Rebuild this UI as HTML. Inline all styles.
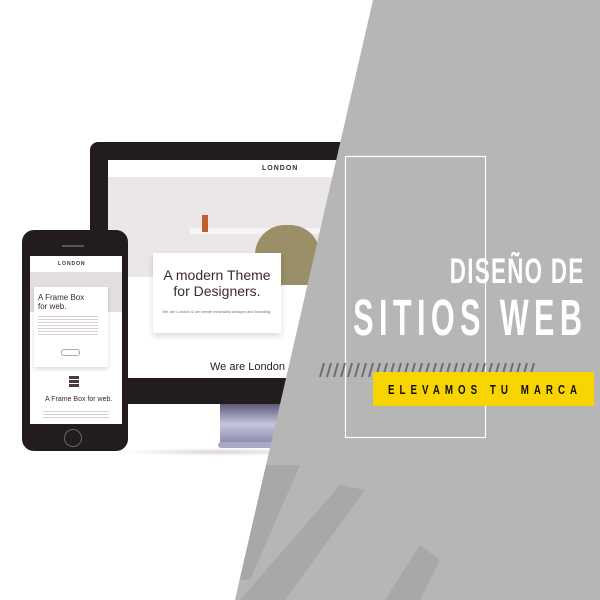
<!DOCTYPE html>
<html><head><style>
body{margin:0;width:600px;height:600px;overflow:hidden;background:#fff;position:relative;font-family:"Liberation Sans",sans-serif}
.a{position:absolute}
.cond{font-family:"Liberation Sans",sans-serif;font-weight:bold;color:#fff;white-space:nowrap}
</style></head><body>
<!-- monitor -->
<div class="a" style="left:90px;top:142px;width:280px;height:262px;background:#231c1e;border-radius:8px"></div>
<div class="a" style="left:108px;top:160px;width:262px;height:218px;background:#fff"></div>
<div class="a" style="left:108px;top:177px;width:262px;height:100px;background:#ebe6e8"></div>
<div class="a" style="left:190px;top:228px;width:150px;height:6px;background:#f6f4f4"></div>
<div class="a" style="left:255px;top:225px;width:65px;height:60px;background:#9a8f66;border-radius:30px 30px 8px 8px"></div>
<div class="a" style="left:202px;top:215px;width:6px;height:17px;background:#c0602c"></div>
<div class="a" style="left:262px;top:165px;font-size:7px;font-weight:bold;letter-spacing:1px;color:#3a2a30">LONDON</div>
<div class="a" style="left:153px;top:253px;width:128px;height:80px;background:#fff;box-shadow:0 3px 6px rgba(0,0,0,.15);text-align:center;color:#3a2a30">
<div style="font-size:14px;line-height:16px;margin-top:14px">A modern Theme<br>for Designers.</div>
<div style="font-size:4px;margin-top:10px;color:#775">We are London &amp; we create minimalist designs and branding.</div></div>
<div class="a" style="left:210px;top:361px;font-size:11px;color:#2a2024">We are London and</div>
<div class="a" style="left:220px;top:404px;width:70px;height:40px;background:linear-gradient(#5a5a7a,#c4c4dc,#8888a8)"></div>
<div class="a" style="left:218px;top:442px;width:80px;height:6px;background:#a9aac8;border-radius:3px"></div>
<div class="a" style="left:120px;top:448px;width:200px;height:8px;background:radial-gradient(rgba(120,80,90,.25),transparent 70%)"></div>
<!-- phone -->
<div class="a" style="left:22px;top:230px;width:106px;height:221px;background:#231c1e;border-radius:12px"></div>
<div class="a" style="left:30px;top:256px;width:92px;height:168px;background:#fff"></div>
<div class="a" style="left:62px;top:245px;width:22px;height:2px;background:#555"></div>
<div class="a" style="left:64px;top:429px;width:16px;height:16px;border:1px solid #666;border-radius:50%"></div>
<div class="a" style="left:30px;top:272px;width:92px;height:40px;background:#e4dde0"></div>
<div class="a" style="left:58px;top:261px;font-size:5px;font-weight:bold;letter-spacing:1px;color:#3a2a30">LONDON</div>
<div class="a" style="left:34px;top:287px;width:74px;height:80px;background:#fff;box-shadow:0 2px 4px rgba(0,0,0,.15)"></div>
<div class="a" style="left:38px;top:293px;font-size:8px;line-height:9px;color:#3a2a30">A Frame Box<br>for web.</div>
<div class="a" style="left:38px;top:314px;width:60px;height:22px;background:repeating-linear-gradient(#fff 0 2px,#d8d0d2 2px 3px)"></div>
<div class="a" style="left:61px;top:349px;width:17px;height:5px;border:1px solid #aaa;border-radius:3px"></div>
<div class="a" style="left:69px;top:375px;width:10px;height:13px;background:repeating-linear-gradient(#fff 0 1px,#4a3a40 1px 4px)"></div>
<div class="a" style="left:45px;top:396px;font-size:7px;color:#3a2a30">A Frame Box for web.</div>
<div class="a" style="left:43px;top:409px;width:66px;height:10px;background:repeating-linear-gradient(#fff 0 2px,#d8d0d2 2px 3px)"></div>
<!-- gray panel -->
<svg class="a" style="left:0;top:0" width="600" height="600">
<defs><clipPath id="c"><polygon points="373,0 600,0 600,600 235,600"/></clipPath></defs>
<polygon points="373,0 600,0 600,600 235,600" fill="#b6b6b6"/>
<g clip-path="url(#c)" fill="#a8a8a8">
<polygon points="230,465 300,465 250,580 200,580"/>
<polygon points="340,485 365,490 285,600 240,600"/>
<polygon points="420,545 440,560 420,600 385,600"/>
</g>
<rect x="345.5" y="156.5" width="140" height="281" fill="none" stroke="#fff" stroke-width="1.2"/>
<g stroke="#6e6e6e" stroke-width="2">
<path d="M320,377l4,-14M327,377l4,-14M334,377l4,-14M341,377l4,-14M348,377l4,-14M355,377l4,-14M362,377l4,-14M369,377l4,-14M376,377l4,-14M383,377l4,-14M390,377l4,-14M397,377l4,-14M404,377l4,-14M411,377l4,-14M418,377l4,-14M425,377l4,-14M432,377l4,-14M439,377l4,-14M446,377l4,-14M453,377l4,-14M460,377l4,-14M467,377l4,-14M474,377l4,-14M481,377l4,-14M488,377l4,-14M495,377l4,-14M502,377l4,-14M509,377l4,-14M516,377l4,-14M523,377l4,-14M530,377l4,-14"/>
</g>
<rect x="373" y="372" width="221" height="34" fill="#f8d500"/>
</svg>
<div class="a" style="right:17px;top:254px"><div class="cond" style="font-size:35px;line-height:35px;letter-spacing:2px;margin-right:-2px;transform:scaleX(.64);transform-origin:100% 0">DISEÑO DE</div></div>
<div class="a" style="right:22px;top:292px"><div class="cond" style="font-size:51px;line-height:51px;letter-spacing:9px;margin-right:-9px;transform:scaleX(.6);transform-origin:100% 0">SITIOS WEB</div></div>
<div class="a" style="left:388px;top:383px"><div class="cond" style="font-size:13px;line-height:13px;letter-spacing:6.7px;color:#111;transform:scaleX(.75);transform-origin:0 0">ELEVAMOS TU MARCA</div></div>
</body></html>
